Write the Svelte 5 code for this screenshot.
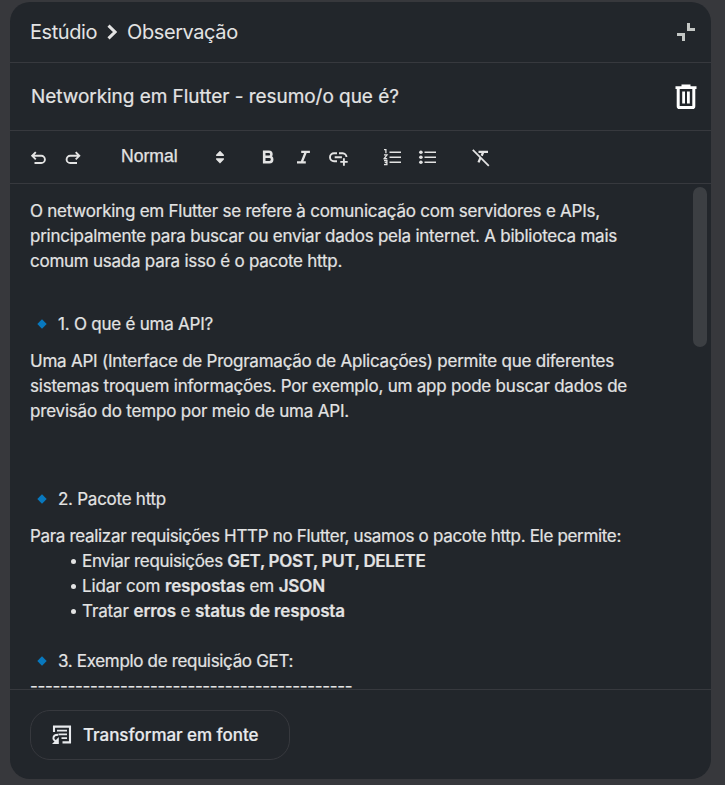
<script>
  const intro = [
    ['O networking em Flutter se refere à comunicação com servidores e APIs,', -0.235],
    ['principalmente para buscar ou enviar dados pela internet. A biblioteca mais', -0.248],
    ['comum usada para isso é o pacote http.', -0.25]
  ];
  const about = [
    ['Uma API (Interface de Programação de Aplicações) permite que diferentes', -0.233],
    ['sistemas troquem informações. Por exemplo, um app pode buscar dados de', -0.217],
    ['previsão do tempo por meio de uma API.', -0.193]
  ];
  const dashes = '-'.repeat(43);
</script>

{#snippet line(text, tracking)}
  <div class="line" style:letter-spacing="{tracking}px">{text}</div>
{/snippet}

{#snippet heading(text, tracking)}
  <svg class="diamond" viewBox="0 0 10 10"><path d="M5 .3 9.7 5 5 9.7.3 5Z" fill="#0878be" /></svg>
  <span style:letter-spacing="{tracking}px">{text}</span>
{/snippet}

<div class="page">
  <section class="panel">
    <header class="crumbs">
      <span>Estúdio</span>
      <svg class="chevron" viewBox="0 0 10 16"><path d="M1.5 1.7 8 8l-6.5 6.3" /></svg>
      <span>Observação</span>
      <svg class="collapse" viewBox="0 0 20 20"><path d="M11 1h3v5h5v3h-8zM1 11h8v8H6v-5H1z" fill="#c4c7c5" /></svg>
    </header>

    <div class="title">
      <h1>Networking em Flutter - resumo/o que é?</h1>
      <svg class="trash" viewBox="0 0 22 26">
        <path d="M.5 3.7h21M6.5 2h9" stroke-width="2.8" />
        <path d="M3.2 4v18.2c0 .8.5 1.3 1.3 1.3h13c.8 0 1.3-.5 1.3-1.3V4" stroke-width="3" />
        <path d="M8.6 7.5v12M13.4 7.5v12" stroke-width="2.8" />
      </svg>
    </div>

    <div class="toolbar">
      <svg viewBox="0 0 24 24"><path d="M6.5 10.8h8.8a3.6 3.6 0 0 1 0 7.2H8.5M9.8 7.2 6.2 10.8l3.6 3.6" /></svg>
      <svg class="near" viewBox="0 0 24 24"><path d="M18 10.8H9.2a3.6 3.6 0 0 0 0 7.2H16M14.7 7.2l3.6 3.6-3.6 3.6" /></svg>
      <div class="format">Normal</div>
      <svg viewBox="0 0 24 24"><path class="solid" d="m12 5.8 3.9 4v1.3H8.1V9.8zM8.1 13.3h7.8v1.3L12 18.6l-3.9-4z" /></svg>
      <svg class="bold" viewBox="0 0 24 24"><path d="M8.2 6.8h4.7a2.5 2.5 0 0 1 0 5H8.2zM8.2 11.8h5.2a2.7 2.7 0 0 1 0 5.5H8.2z" stroke-width="2.6" /></svg>
      <svg class="near" viewBox="0 0 24 24"><path d="M10.2 6.9h8.7M6 17.3h8.8M14.8 7l-4 10" stroke-width="2.3" /></svg>
      <svg class="near" viewBox="0 0 24 24"><path d="M11 8.2H8a4 4 0 0 0 0 8h3M13 8.2h3.6a4 4 0 0 1 3.9 3.9M8.7 12.2h7.2M17.9 13.2v7.6M14.3 16.9h7.4" stroke-width="1.9" /></svg>
      <svg class="far" viewBox="0 0 24 24">
        <path d="M9.5 7.2H21M9.5 12.2H21M9.5 17.2H21" stroke-width="1.6" />
        <path d="M4 4.7h1.9v3.6M4 9.8h3L4.2 13.6h3M4 15.5h2.9v4.1H4M4.7 17.5h2" stroke-width="1.3" />
      </svg>
      <svg class="near" viewBox="0 0 24 24">
        <path d="M9.5 7.2H21M9.5 12.2H21M9.5 17.2H21" stroke-width="1.6" />
        <g class="solid"><circle cx="5.9" cy="7.2" r="1.8" /><circle cx="5.9" cy="12.2" r="1.8" /><circle cx="5.9" cy="17.2" r="1.8" /></g>
      </svg>
      <svg class="far" viewBox="0 0 24 24"><path d="M3.8 4.8 19.8 20.8" stroke-width="1.8" /><path d="M9.5 6.9H19M14 7.5l-1.3 3.2M11.5 12.6l-2 4.8" stroke-width="2.3" /></svg>
    </div>

    <div class="editor">
      <article>
        <div>{#each intro as [text, tracking]}{@render line(text, tracking)}{/each}</div>
        <h2 class="first">{@render heading('1. O que é uma API?', -0.23)}</h2>
        <div>{#each about as [text, tracking]}{@render line(text, tracking)}{/each}</div>
        <h2 class="second">{@render heading('2. Pacote http', -0.26)}</h2>
        {@render line('Para realizar requisições HTTP no Flutter, usamos o pacote http. Ele permite:', -0.324)}
        <ul>
          <li style:letter-spacing="-0.34px">Enviar requisições <b>GET, POST, PUT, DELETE</b></li>
          <li style:letter-spacing="-0.15px">Lidar com <b>respostas</b> em <b>JSON</b></li>
          <li style:letter-spacing="-0.12px">Tratar <b>erros</b> e <b>status de resposta</b></li>
        </ul>
        <h2 class="third">{@render heading('3. Exemplo de requisição GET:', -0.33)}</h2>
        {@render line(dashes, -0.325)}
      </article>
      <div class="thumb"></div>
    </div>

    <footer>
      <button>
        <svg viewBox="0 0 20 20">
          <path d="M2 7V1.6h16v15.8h-7.5" stroke-width="2.1" />
          <path d="M5 5.6h10M6.5 9.4H15M9.5 13.2H15" stroke-width="1.8" />
          <path d="M6.2 9.8c-3 0-4.8 1.3-4.8 3.4 0 1.5 1 2.4 3 3.2" stroke-width="1.9" />
          <path d="M6.8 12v7H0z" fill="#e8eaed" stroke="none" />
        </svg>
        <span>Transformar em fonte</span>
      </button>
    </footer>
  </section>
</div>

<style>
  .page {
    box-sizing: border-box;
    width: 725px;
    height: 785px;
    padding: 2px 14px 6px 10px;
    background: #37383c;
    color: #e3e3e3;
    font-family: Inter, "Open Sans", sans-serif;
    font-size: 17px;
    line-height: 25px;
    -webkit-text-stroke: 0.2px currentColor;
    overflow: hidden;
  }
  .panel {
    display: flex;
    flex-direction: column;
    height: 777px;
    background: #22262b;
    border-radius: 20px;
    overflow: hidden;
  }
  svg {
    flex: none;
    fill: none;
    stroke: #e3e3e3;
    stroke-width: 1.9;
  }
  .solid { fill: #e3e3e3; stroke: none; }
  .crumbs, .title, .toolbar {
    box-sizing: border-box;
    display: flex;
    align-items: center;
    flex: none;
    border-bottom: 1px solid #37393e;
    white-space: nowrap;
  }
  .crumbs {
    height: 61px;
    padding: 0 15px 0 20px;
    font-size: 20px;
    letter-spacing: -0.42px;
    -webkit-text-stroke-width: 0;
  }
  .chevron { width: 10px; height: 16px; margin: 0 10px; stroke-width: 3; }
  .collapse { width: 20px; height: 20px; margin-left: auto; stroke: none; }
  .title { height: 68px; padding: 0 14px 0 21px; }
  h1 {
    margin: 0;
    font-size: 19px;
    font-weight: 400;
    letter-spacing: -0.045px;
  }
  .trash { width: 22px; height: 26px; margin-left: auto; stroke: #fff; }
  .toolbar { height: 53px; padding-left: 16px; }
  .toolbar svg { width: 24px; height: 24px; }
  .toolbar .near { margin-left: 11px; }
  .toolbar .far { margin-left: 30px; }
  .toolbar .bold { margin-left: 24px; }
  .format {
    width: 87px;
    margin: -2px 0 0 36px;
    font: 17.6px/24px "Liberation Sans", Arial, sans-serif;
    -webkit-text-stroke-width: 0.25px;
  }
  .editor {
    display: flex;
    flex: none;
    height: 505px;
    overflow: hidden;
  }
  article {
    flex: 1;
    padding: 15px 0 0 20px;
    white-space: nowrap;
  }
  .line { height: 25px; }
  h2 {
    display: flex;
    align-items: center;
    height: 25px;
    margin: 0 0 12px;
    padding-left: 7px;
    font-size: 17px;
    font-weight: 400;
  }
  .diamond { width: 10px; height: 10px; margin: -2px 11px 0 0; stroke: none; }
  .first { margin-top: 38px; }
  .second { margin-top: 63px; }
  .third { margin: 25px 0 0; }
  ul { margin: 0; padding: 0; list-style: none; }
  li { display: flex; align-items: center; height: 25px; padding-left: 41px; white-space: pre; }
  li::before {
    content: "";
    width: 5px;
    height: 5px;
    margin-right: 6px;
    border-radius: 50%;
    background: #e3e3e3;
  }
  b { font-weight: 600; }
  .thumb {
    width: 14px;
    height: 160px;
    margin: 3px 4px 0 0;
    border-radius: 7px;
    background: #3c3f43;
  }
  footer {
    flex: 1;
    padding: 20px 0 0 20px;
    border-top: 1px solid #37393e;
  }
  button {
    box-sizing: border-box;
    display: flex;
    align-items: center;
    width: 260px;
    height: 50px;
    padding: 0 0 0 22px;
    border: 1px solid #37393e;
    border-radius: 20px;
    background: none;
    color: #e8eaed;
    font: 500 17px/25px Inter, sans-serif;
    letter-spacing: -0.04px;
    white-space: nowrap;
  }
  button svg { width: 20px; height: 20px; margin: 0 10px 0 -1px; stroke: #e8eaed; }
  button span { margin-left: 1px; }
</style>
